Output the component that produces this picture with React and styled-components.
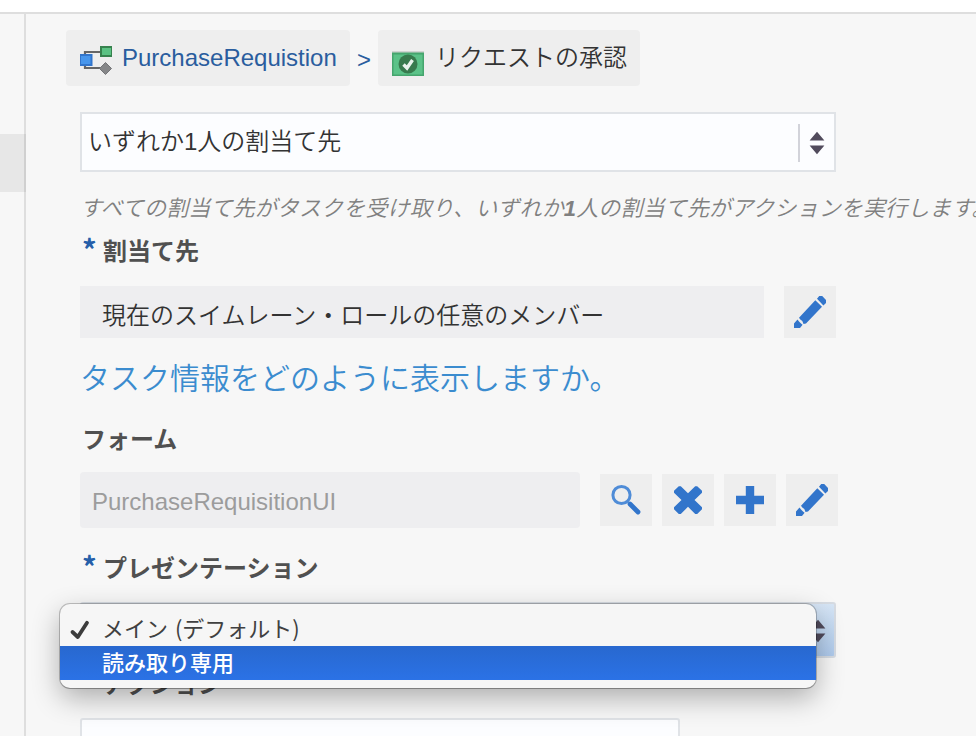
import React from "react";
import styled, { createGlobalStyle, css } from "styled-components";

const Global = createGlobalStyle`
  * { box-sizing: border-box; }
  html, body { margin: 0; height: 100%; overflow: hidden; background: #f7f7f7; }
  body { font-family: "Liberation Sans", "Noto Sans CJK JP", sans-serif; font-size: 24px; color: #333; }
`;

const Page = styled.div`
  height: 736px;
  display: flex;
  flex-direction: column;
  overflow: hidden;
  background: #f7f7f7;
`;
const TopBar = styled.header`
  flex: none;
  height: 14px;
  background: #fff;
  border-bottom: 2px solid #dedede;
`;
const Body = styled.div`
  flex: 1;
  display: flex;
  min-height: 0;
`;
const Sidebar = styled.aside`
  flex: none;
  width: 26px;
  padding-top: 120px;
  border-right: 2px solid #dedede;
`;
const ActiveTab = styled.div`
  width: 26px;
  height: 58px;
  background: rgba(0, 0, 0, 0.063);
`;
const Main = styled.main`
  flex: 1;
  min-width: 0;
  padding: 16px 0 0 54px;
`;
const Breadcrumb = styled.nav`
  display: flex;
  height: 56px;
  margin-left: -14px;
`;
const Crumb = styled.a`
  display: flex;
  align-items: center;
  width: ${(p) => p.$width}px;
  padding-left: 14px;
  border-radius: 4px;
  background: #eeeeee;
  color: ${(p) => (p.$link ? "#2a5d9e" : "#333")};
  white-space: nowrap;
  svg { flex: none; margin-top: ${(p) => (p.$link ? 4 : 11)}px; }
`;
const CrumbText = styled.span`
  margin-left: ${(p) => p.$gap}px;
  line-height: 36px;
  font-weight: ${(p) => p.$weight || 400};
  padding-bottom: ${(p) => p.$lift || 0}px;
`;
const Separator = styled.span`
  width: 28px;
  text-align: center;
  line-height: 60px;
  color: #2a5d9e;
`;
const SelectBox = styled.div`
  display: flex;
  align-items: center;
  justify-content: space-between;
  width: 756px;
  height: 60px;
  margin-top: 26px;
  padding-left: 6px;
  border: 2px solid #e0e3e7;
  background: #fcfdff;
  font-weight: 350;
`;
const SelectText = styled.span`
  line-height: 36px;
  padding-bottom: 1px;
`;
const Stepper = styled.div`
  display: flex;
  align-items: center;
  width: 36px;
  height: 38px;
  margin-top: 1px;
  padding-left: 9px;
  border-left: 2px solid #d2d3da;
`;
const Hint = styled.p`
  width: 940px;
  height: 32px;
  margin: 21px 0 0;
  font-size: 22px;
  font-style: italic;
  font-weight: 350;
  line-height: 32px;
  color: #808080;
  white-space: nowrap;
  letter-spacing: 0.14px;
  b { font-weight: 700; }
`;
const Label = styled.div`
  display: flex;
  height: 36px;
  margin-top: ${(p) => p.$top}px;
  padding-left: ${(p) => p.$indent || 0}px;
  font-weight: 700;
  line-height: 36px;
  color: #505050;
`;
const Required = styled.span`
  width: 21px;
  color: #265fa9;
  font-family: "Noto Sans CJK JP", sans-serif;
  font-size: 29px;
  line-height: 28px;
`;
const FieldRow = styled.div`
  display: flex;
  align-items: center;
  margin-top: ${(p) => p.$top}px;
`;
const ReadOnly = styled.div`
  display: flex;
  align-items: center;
  width: ${(p) => p.$width}px;
  height: ${(p) => p.$height}px;
  padding-left: ${(p) => p.$inset}px;
  margin-right: 20px;
  border-radius: ${(p) => p.$radius}px;
  background: #eeeef0;
  color: ${(p) => (p.$muted ? "#9c9c9c" : "#333")};
  white-space: nowrap;
  span {
    padding-top: ${(p) => (p.$muted ? 4 : 2)}px;
    font-weight: ${(p) => (p.$muted ? 400 : 350)};
  }
`;
const IconButton = styled.button`
  display: flex;
  align-items: center;
  justify-content: center;
  width: 52px;
  height: 52px;
  padding: 0;
  margin-right: 10px;
  border: 0;
  background: #eeeeee;
`;
const Heading = styled.h2`
  height: 44px;
  margin: 19px 0 0;
  font-size: 30px;
  font-weight: 350;
  line-height: 44px;
  color: #3b8ccf;
  white-space: nowrap;
`;
const MenuAnchor = styled.div`
  position: relative;
  width: 756px;
  height: 56px;
  margin-top: 15px;
`;
const FocusedSelect = styled.div`
  display: flex;
  align-items: center;
  justify-content: flex-end;
  height: 56px;
  padding: 1px 8px 0 0;
  border: 2px solid #d6dbe2;
  border-radius: 3px;
  background: linear-gradient(#d6e5f5, #aecaec);
`;
const Menu = styled.div`
  position: absolute;
  z-index: 1;
  top: 2px;
  left: -20px;
  width: 756px;
  height: 84px;
  padding-top: 8px;
  border-radius: 10px;
  background: #f6f6f6;
  box-shadow: 0 0 0 1px rgba(0, 0, 0, 0.22), 0 1px 0 rgba(0, 0, 0, 0.15), 0 10px 28px rgba(0, 0, 0, 0.3);
  font-family: "Noto Sans CJK JP", sans-serif;
  font-size: 22px;
`;
const MenuItem = styled.div`
  display: flex;
  align-items: center;
  height: 34px;
  padding-left: 9px;
  white-space: nowrap;
  line-height: 30px;
  color: #404040;
  ${(p) =>
    p.$active &&
    css`
      background: linear-gradient(#2868cf, #2b72e6);
      color: #fff;
      font-weight: 500;
    `}
`;
const MenuText = styled.span`
  padding-bottom: 4px;
  word-spacing: 2px;
`;
const CheckSlot = styled.span`
  display: flex;
  width: 33px;
  padding-top: 2px;
`;
const TextBox = styled.div`
  width: 600px;
  height: 60px;
  margin-top: 15px;
  border: 2px solid #e0e3e7;
  border-radius: 3px;
  background: #fcfdff;
`;

const Arrows = () => (
  <svg width="16" height="24" viewBox="0 0 16 24" fill="#514b5c">
    <path d="M8 .7 15.4 9.4H.6z M8 23.3 15.4 14.6H.6z" />
  </svg>
);
const ProcessIcon = () => (
  <svg width="32" height="29" viewBox="0 0 32 29">
    <path d="M5 10V6h16M5 18v4h16" fill="none" stroke="#666" strokeWidth="2.2" />
    <rect x="0" y="9" width="11.5" height="10" fill="#4796ec" stroke="#3275cb" strokeWidth="2" />
    <rect x="21" y="1" width="11" height="9" fill="#5bc283" stroke="#37824e" strokeWidth="2" />
    <path d="m25.5 16.5 6 6-6 6-6-6z" fill="#858688" stroke="#737477" />
  </svg>
);
const ApprovalIcon = () => (
  <svg width="32" height="25" viewBox="0 0 32 25">
    <rect width="32" height="2" fill="#d0d3d1" />
    <rect y="1.5" width="32" height="23.5" fill="#45a56d" />
    <rect x="1.5" y="3.5" width="29" height="20" fill="#5bc288" />
    <circle cx="16" cy="13" r="9.5" fill="#377a4d" />
    <path d="m11.5 13.5 3.5 3.5 5.5-8" fill="none" stroke="#e8f3ec" strokeWidth="3.4" />
  </svg>
);
const PencilIcon = () => (
  <svg width="32" height="32" viewBox="0 0 32 32" fill="#3275cb">
    <path d="M5 21.8 21.3 4.2l6.7 6.6L12 27.5 9.5 28 8.3 25l-2-1.5z M23 2.7 25.2 0h3L32 4v3l-2.6 2.4z M3.5 23.5l1.5 2 2 2 1.6 1.2L6 32H0v-4.5z" />
  </svg>
);
const SearchIcon = () => (
  <svg width="32" height="32" viewBox="0 0 32 32" fill="none">
    <circle cx="11.5" cy="11" r="8.6" stroke="#4f8cd7" strokeWidth="3" />
    <path d="m20 20 8 8" stroke="#3275cb" strokeWidth="4.8" strokeLinecap="round" />
  </svg>
);
const RemoveIcon = () => (
  <svg width="32" height="32" viewBox="0 0 32 32">
    <path
      d="M6.8 2.2h2L16 9.2l7.2-7h2L30 6.8v2L22.5 16l7.5 7.2v2L25.2 30h-2L16 22.8 8.8 30h-2L2 25.2v-2L9.5 16 2 8.8v-2z"
      fill="#3275cb"
    />
  </svg>
);
const AddIcon = () => (
  <svg width="32" height="32" viewBox="0 0 32 32">
    <path d="M16 2v28M2 16h28" stroke="#3275cb" strokeWidth="8.4" />
  </svg>
);
const CheckIcon = () => (
  <svg width="24" height="22" viewBox="0 0 24 22">
    <path d="m3.5 13 5.3 5L18 3.8" fill="none" stroke="#3c3c3c" strokeWidth="3.8" strokeLinecap="round" strokeLinejoin="round" />
  </svg>
);

export default function App() {
  return (
    <Page>
      <Global />
      <TopBar />
      <Body>
        <Sidebar>
          <ActiveTab />
        </Sidebar>
        <Main>
          <Breadcrumb>
            <Crumb $width={284} $link>
              <ProcessIcon />
              <CrumbText $gap={10}>PurchaseRequistion</CrumbText>
            </Crumb>
            <Separator>&gt;</Separator>
            <Crumb $width={262}>
              <ApprovalIcon />
              <CrumbText $gap={11} $weight={350} $lift={1}>リクエストの承認</CrumbText>
            </Crumb>
          </Breadcrumb>
          <SelectBox>
            <SelectText>いずれか1人の割当て先</SelectText>
            <Stepper>
              <Arrows />
            </Stepper>
          </SelectBox>
          <Hint>
            すべての割当て先がタスクを受け取り、いずれか<b>1</b>人の割当て先がアクションを実行します。
          </Hint>
          <Label $top={9} $indent={2}>
            <Required>*</Required>割当て先
          </Label>
          <FieldRow $top={16}>
            <ReadOnly $width={684} $height={52} $inset={22} $radius={0}>
              <span>現在のスイムレーン・ロールの任意のメンバー</span>
            </ReadOnly>
            <IconButton aria-label="edit">
              <PencilIcon />
            </IconButton>
          </FieldRow>
          <Heading>タスク情報をどのように表示しますか。</Heading>
          <Label $top={21} $indent={2}>フォーム</Label>
          <FieldRow $top={14}>
            <ReadOnly $width={500} $height={56} $inset={12} $radius={4} $muted>
              <span>PurchaseRequisitionUI</span>
            </ReadOnly>
            <IconButton aria-label="search"><SearchIcon /></IconButton>
            <IconButton aria-label="remove"><RemoveIcon /></IconButton>
            <IconButton aria-label="add"><AddIcon /></IconButton>
            <IconButton aria-label="edit"><PencilIcon /></IconButton>
          </FieldRow>
          <Label $top={23} $indent={2}>
            <Required>*</Required>プレゼンテーション
          </Label>
          <MenuAnchor>
            <FocusedSelect>
              <Arrows />
            </FocusedSelect>
            <Menu role="listbox">
              <MenuItem>
                <CheckSlot><CheckIcon /></CheckSlot>
                <MenuText>メイン (デフォルト)</MenuText>
              </MenuItem>
              <MenuItem $active>
                <CheckSlot />
                <MenuText>読み取り専用</MenuText>
              </MenuItem>
            </Menu>
          </MenuAnchor>
          <Label $top={9} $indent={23}>アクション</Label>
          <TextBox />
        </Main>
      </Body>
    </Page>
  );
}
